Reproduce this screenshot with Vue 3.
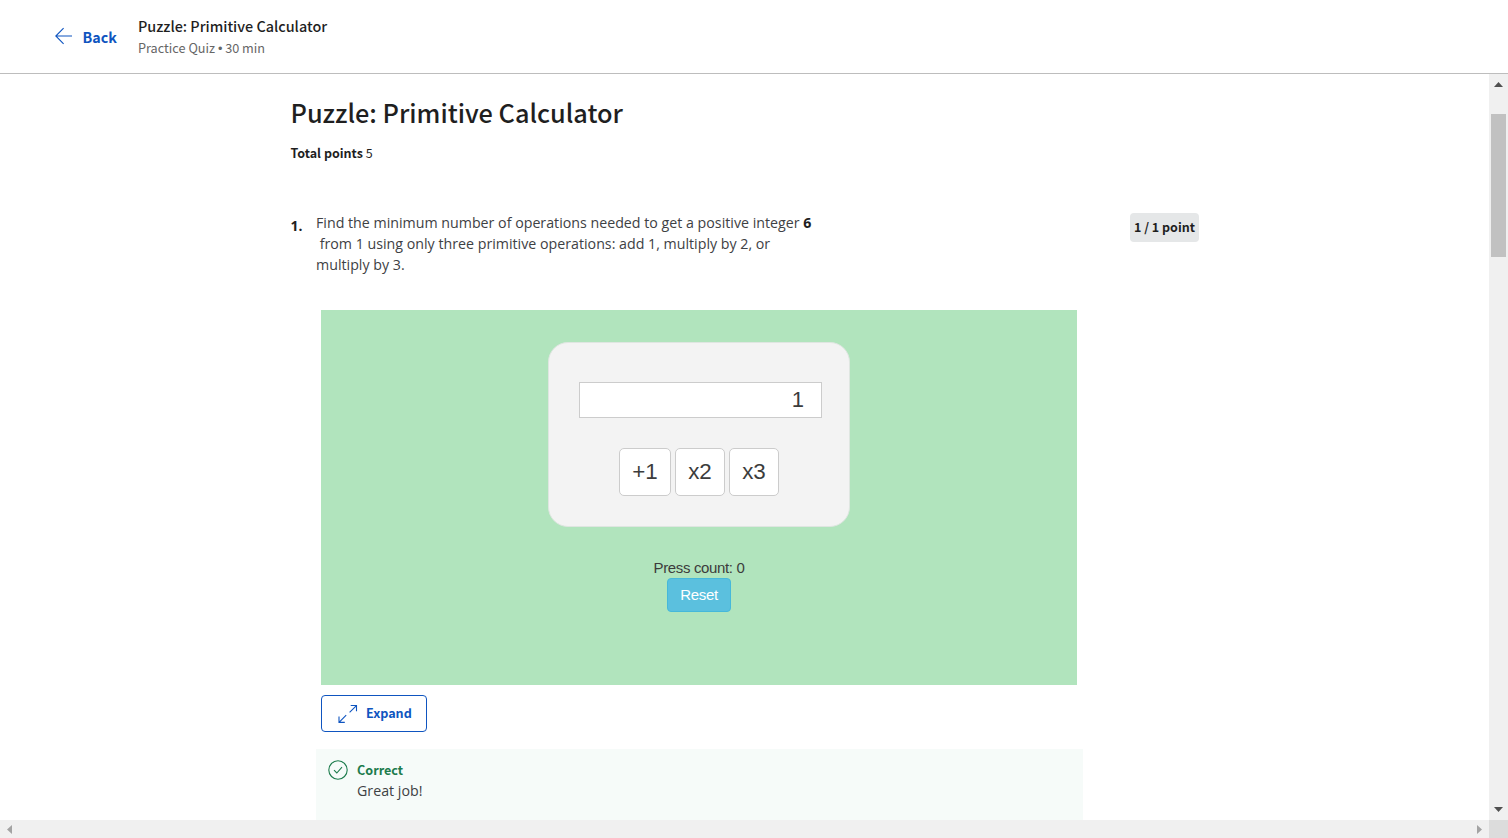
<script setup>
import { ref } from 'vue'

const value = ref(1)
const presses = ref(0)
const operations = [
  { label: '+1', apply: (n) => n + 1 },
  { label: 'x2', apply: (n) => n * 2 },
  { label: 'x3', apply: (n) => n * 3 },
]

function press(op) {
  value.value = op.apply(value.value)
  presses.value += 1
}

function reset() {
  value.value = 1
  presses.value = 0
}
</script>

<template>
  <div class="page">
    <header class="topbar">
      <a class="back">
        <svg class="back-arrow" width="18" height="18" viewBox="0 0 18 18" fill="none" stroke="currentColor" stroke-width="1.1">
          <path d="M17 9H1M8.6 1.2L.8 9l7.8 7.8" />
        </svg>
        <span>Back</span>
      </a>
      <div class="heading">
        <div class="heading-title">Puzzle: Primitive Calculator</div>
        <div class="heading-sub">Practice Quiz <span class="dot">•</span> 30 min</div>
      </div>
    </header>

    <div class="viewport">
      <main class="content">
        <h1>Puzzle: Primitive Calculator</h1>
        <p class="total"><b>Total points</b> <span>5</span></p>

        <section class="question">
          <div class="number">1.</div>
          <div class="prompt">
            <div>Find the minimum number of operations needed to get a positive integer <b>6</b></div>
            <div>&nbsp;from 1 using only three primitive operations: add 1, multiply by 2, or</div>
            <div>multiply by 3.</div>
          </div>
          <div class="points">1 / 1 point</div>
        </section>

        <section class="widget">
          <div class="calculator">
            <div class="display">{{ value }}</div>
            <div class="keys">
              <button v-for="op in operations" :key="op.label" @click="press(op)">{{ op.label }}</button>
            </div>
          </div>
          <div class="count">Press count: {{ presses }}</div>
          <button class="reset" @click="reset">Reset</button>
        </section>

        <button class="expand">
          <svg width="20" height="20" viewBox="0 0 20 20" fill="none" stroke="currentColor" stroke-width="1.1">
            <path d="M11.6 8.4L18.2 1.8M12.7 1.5h5.8v5.8M8.2 11.2L1.3 18.1M1 12.6v5.8h5.8" />
          </svg>
          <span>Expand</span>
        </button>

        <section class="feedback">
          <svg width="20" height="20" viewBox="0 0 20 20" fill="none" stroke="currentColor" stroke-width="1.1">
            <circle cx="10" cy="10" r="9.2" />
            <path d="M6 10.2l2.8 2.8 5.2-5.8" />
          </svg>
          <div>
            <div class="verdict">Correct</div>
            <div class="note">Great job!</div>
          </div>
        </section>
      </main>

      <div class="vbar">
        <svg class="up" width="9" height="5" viewBox="0 0 9 5"><path d="M0 5L4.5 0 9 5z" fill="#505050" /></svg>
        <div class="thumb"></div>
        <svg class="down" width="9" height="5" viewBox="0 0 9 5"><path d="M0 0h9L4.5 5z" fill="#505050" /></svg>
      </div>
    </div>

    <div class="hbar">
      <svg width="5" height="9" viewBox="0 0 5 9"><path d="M5 0v9L0 4.5z" fill="#a3a3a3" /></svg>
      <svg class="right" width="5" height="9" viewBox="0 0 5 9"><path d="M0 0v9l5-4.5z" fill="#a3a3a3" /></svg>
      <div class="corner"></div>
    </div>
  </div>
</template>

<style>
body {
  margin: 0;
  overflow: hidden;
}
</style>

<style scoped>
* {
  box-sizing: border-box;
}
.page {
  width: 1508px;
  height: 838px;
  display: flex;
  flex-direction: column;
  background: #fff;
  color: #1f1f1f;
  font-family: "Noto Sans CJK SC", "Open Sans", sans-serif;
  white-space: nowrap;
  overflow: hidden;
}
.topbar {
  flex: none;
  height: 74px;
  border-bottom: 1px solid #bdbdbd;
  display: flex;
}
.back {
  width: 138px;
  padding: 0 0 1px 55px;
  display: flex;
  align-items: center;
  gap: 9.5px;
  color: #0f55c0;
  font-size: 14.3px;
  font-weight: 700;
}
.heading {
  padding-top: 16px;
}
.heading-title {
  font-size: 14.4px;
  font-weight: 500;
  line-height: 20px;
}
.heading-sub {
  font-size: 12.7px;
  line-height: 24px;
  color: #666;
}
.dot {
  font-family: "Liberation Sans", Arial, sans-serif;
  line-height: 1;
}
.viewport {
  height: 746px;
  display: flex;
  justify-content: space-between;
  overflow: hidden;
}
.content {
  padding-left: 290.5px;
}
h1 {
  margin: 18px 0 0;
  font-size: 25.3px;
  font-weight: 500;
  line-height: 40px;
}
.total {
  margin: 11px 0 0;
  font-size: 12.5px;
  line-height: 20px;
}
.question {
  margin-top: 49px;
  display: flex;
  height: 98px;
}
.number {
  width: 25.5px;
  padding-top: 4px;
  font: 700 14px/20px "Open Sans", sans-serif;
}
.prompt {
  width: 814px;
  font-family: "Open Sans", sans-serif;
  font-size: 14.23px;
  line-height: 21.2px;
  color: #3e4144;
}
.prompt b {
  color: #1f1f1f;
}
.points {
  width: 69px;
  height: 29px;
  margin-top: 1px;
  padding-bottom: 1px;
  border-radius: 4px;
  background: #e5e7e8;
  font-size: 12.5px;
  font-weight: 700;
  line-height: 28px;
  text-align: center;
}
.widget {
  margin-left: 30.5px;
  width: 756px;
  height: 375px;
  padding-top: 32px;
  background: #b1e4bd;
  display: flex;
  flex-direction: column;
  align-items: center;
  font-family: "Liberation Sans", Arial, sans-serif;
  color: #3c3c3c;
}
.calculator {
  width: 302px;
  height: 185px;
  padding: 39px 0 0 30px;
  border: 1px solid #dfe6e1;
  border-radius: 20px;
  background: #f3f3f3;
}
.display {
  width: 243px;
  height: 36px;
  padding-right: 17px;
  border: 1px solid #ccc;
  background: #fff;
  font-size: 22px;
  line-height: 34px;
  text-align: right;
}
.keys {
  margin: 30px 0 0 40px;
  display: flex;
  gap: 4px;
}
.keys button {
  width: 50px;
  height: 48px;
  padding: 0;
  border: 1px solid #ccc;
  border-radius: 5px;
  background: #fff;
  color: #3c3c3c;
  font: 22.4px/46px "Liberation Sans", Arial, sans-serif;
}
.keys button:first-child {
  width: 52px;
}
.count {
  margin-top: 31px;
  font-size: 15px;
  letter-spacing: -0.35px;
  line-height: 20px;
}
.reset {
  width: 64px;
  height: 34px;
  padding: 0 0 1px;
  border: 1px solid #46b8da;
  border-radius: 4px;
  background: #5bc0de;
  color: #fff;
  font: 15px/30px "Liberation Sans", Arial, sans-serif;
  letter-spacing: -0.3px;
}
.expand {
  margin: 10px 0 0 30.5px;
  width: 106px;
  height: 37px;
  padding: 0 0 0 16px;
  border: 1px solid #0f55c0;
  border-radius: 4px;
  background: #fff;
  color: #0f55c0;
  display: flex;
  align-items: center;
  gap: 8px;
  font-family: inherit;
  font-size: 12.6px;
  font-weight: 700;
}
.expand span {
  padding-bottom: 2px;
}
.feedback {
  margin: 17px 0 0 25.5px;
  width: 767px;
  height: 80px;
  padding: 11px 0 0 12px;
  background: #f6fbf9;
  display: flex;
  gap: 9px;
  color: #1d7c4d;
}
.verdict {
  font-size: 12.6px;
  font-weight: 700;
  line-height: 20px;
}
.note {
  font-family: "Open Sans", sans-serif;
  font-size: 14.23px;
  line-height: 22px;
  color: #3e4144;
}
.vbar {
  width: 19px;
  padding-top: 8px;
  background: #f0f0f0;
  display: flex;
  flex-direction: column;
  align-items: center;
}
.thumb {
  width: 15px;
  height: 143px;
  margin-top: 27px;
  background: #c1c1c1;
}
.down {
  margin-top: auto;
  margin-bottom: 8px;
}
.hbar {
  height: 18px;
  padding-left: 7px;
  background: #f0f0f0;
  display: flex;
  align-items: center;
}
.right {
  margin-left: auto;
}
.corner {
  width: 19px;
  height: 18px;
  margin-left: 7px;
  background: #dcdcdc;
}
</style>
